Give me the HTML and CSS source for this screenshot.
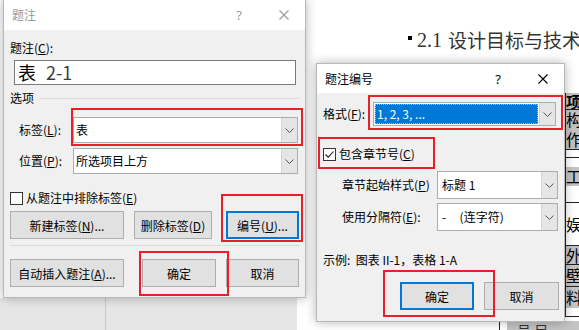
FILE: index.html
```html
<!DOCTYPE html>
<html lang="zh-CN">
<head>
    <meta charset="UTF-8">
    <title>题注</title>
    <link rel="stylesheet" href="styles.css">
</head>
<body>
    <!-- Document behind the dialogs -->
    <div class="doc-margin"><span class="doc-margin-line"></span></div>
    <div class="doc-heading"><span class="doc-bullet"></span><span class="doc-num">2.1</span> 设计目标与技术指标</div>
    <div class="doc-column">
        <div class="cell shade bold h17 line">项</div>
        <div class="cell shade h19">构</div>
        <div class="cell shade h20 line">作</div>
        <div class="cell h7 line"></div>
        <div class="cell h9"></div>
        <div class="cell shade h19">工</div>
        <div class="cell h17 line"></div>
        <div class="cell h42 line">娱</div>
        <div class="cell shade h19 line">外</div>
        <div class="cell shade h21 line">壁</div>
        <div class="cell shade h20">料</div>
        <div class="cell h9 line"></div>
    </div>
    <div class="doc-foot"><span class="doc-foot-line"></span><span class="doc-foot-block">号 目</span></div>

    <!-- 题注 dialog -->
    <div class="dialog caption-dialog">
        <div class="titlebar inactive">
            <span class="title">题注</span>
            <span class="help">?</span>
            <span class="close"><svg width="10" height="10" viewBox="0 0 10 10"><path d="M0.5 0.5 L9.5 9.5 M9.5 0.5 L0.5 9.5" stroke="currentColor" stroke-width="1.1" fill="none"/></svg></span>
        </div>
        <div class="caption-body">
            <div class="field-label">题注(<u>C</u>):</div>
            <div class="caption-input"><span class="caption-word">表</span><span class="caption-num">2-1</span></div>

            <div class="group-title"><span>选项</span><span class="group-line"></span></div>

            <div class="form-row first">
                <span class="row-label">标签(<u>L</u>):</span>
                <div class="select label-select">
                    <span class="select-value">表</span>
                    <span class="select-arrow"><svg width="9" height="5" viewBox="0 0 9 5"><path d="M0.5 0.5 L4.5 4.5 L8.5 0.5" stroke="#555" fill="none"/></svg></span>
                </div>
            </div>
            <div class="form-row">
                <span class="row-label">位置(<u>P</u>):</span>
                <div class="select label-select">
                    <span class="select-value">所选项目上方</span>
                    <span class="select-arrow"><svg width="9" height="5" viewBox="0 0 9 5"><path d="M0.5 0.5 L4.5 4.5 L8.5 0.5" stroke="#555" fill="none"/></svg></span>
                </div>
            </div>

            <div class="check-row exclude">
                <span class="checkbox"></span>
                <span>从题注中排除标签(<u>E</u>)</span>
            </div>

            <div class="button-row row-one">
                <button class="btn w-new">新建标签(<u>N</u>)...</button>
                <button class="btn w-del">删除标签(<u>D</u>)</button>
                <button class="btn default w-num">编号(<u>U</u>)...</button>
            </div>
            <div class="separator"></div>
            <div class="button-row row-two">
                <button class="btn w-new">自动插入题注(<u>A</u>)...</button>
                <button class="btn w-ok">确定</button>
                <button class="btn w-cancel">取消</button>
            </div>
        </div>
    </div>

    <!-- 题注编号 dialog -->
    <div class="dialog numbering-dialog">
        <div class="titlebar">
            <span class="title">题注编号</span>
            <span class="help">?</span>
            <span class="close"><svg width="10" height="10" viewBox="0 0 10 10"><path d="M0.5 0.5 L9.5 9.5 M9.5 0.5 L0.5 9.5" stroke="currentColor" stroke-width="1.1" fill="none"/></svg></span>
        </div>
        <div class="numbering-body">
            <div class="form-row format-row">
                <span class="row-label format-label">格式(<u>F</u>):</span>
                <div class="select format-select">
                    <span class="select-value selected"><span class="focus-rect">1, 2, 3, ...</span></span>
                    <span class="select-arrow"><svg width="9" height="5" viewBox="0 0 9 5"><path d="M0.5 0.5 L4.5 4.5 L8.5 0.5" stroke="#555" fill="none"/></svg></span>
                </div>
            </div>

            <div class="check-row chapter-check">
                <span class="checkbox"><svg width="11" height="11" viewBox="0 0 11 11"><path d="M1.5 5.5 L4.2 8.2 L9.5 2.5" stroke="#222" stroke-width="1.1" fill="none"/></svg></span>
                <span>包含章节号(<u>C</u>)</span>
            </div>

            <div class="form-row indent first-indent">
                <span class="row-label indent-label">章节起始样式(<u>P</u>)</span>
                <div class="select small-select">
                    <span class="select-value">标题 1</span>
                    <span class="select-arrow"><svg width="9" height="5" viewBox="0 0 9 5"><path d="M0.5 0.5 L4.5 4.5 L8.5 0.5" stroke="#555" fill="none"/></svg></span>
                </div>
            </div>
            <div class="form-row indent">
                <span class="row-label indent-label">使用分隔符(<u>E</u>):</span>
                <div class="select small-select">
                    <span class="select-value">-&nbsp;&nbsp;&nbsp;&nbsp;&nbsp;(连字符)</span>
                    <span class="select-arrow"><svg width="9" height="5" viewBox="0 0 9 5"><path d="M0.5 0.5 L4.5 4.5 L8.5 0.5" stroke="#555" fill="none"/></svg></span>
                </div>
            </div>

            <div class="example">示例:&nbsp;&nbsp;图表 II-1，表格 1-A</div>

            <div class="button-row numbering-buttons">
                <button class="btn default w-ok">确定</button>
                <button class="btn w-cancel2">取消</button>
            </div>
        </div>
    </div>

    <!-- red highlight marks -->
    <div class="mark mark-label"></div>
    <div class="mark mark-number"></div>
    <div class="mark mark-ok"></div>
    <div class="mark mark-format"></div>
    <div class="mark mark-chapter"></div>
    <div class="mark mark-ok2"></div>
</body>
</html>
```

FILE: styles.css
```css
/* General */
* {
    box-sizing: border-box;
}

body {
    margin: 0;
    width: 579px;
    height: 330px;
    overflow: hidden;
    position: relative;
    background: #fff;
    font-family: "Noto Sans CJK SC", "Noto Sans", sans-serif;
    font-size: 12px;
    line-height: 16px;
    color: #000;
}

u {
    text-decoration: underline;
    text-underline-offset: 1px;
}

/* Document canvas */
.doc-margin {
    position: absolute;
    left: 0;
    top: 298px;
    width: 297px;
    height: 32px;
    background: #e6e6e6;
}

.doc-margin-line {
    position: absolute;
    left: 105px;
    top: 0;
    bottom: 0;
    width: 1px;
    background: #c8c8c8;
}

.doc-heading {
    position: absolute;
    left: 408px;
    top: 29px;
    width: 171px;
    overflow: hidden;
    white-space: nowrap;
    font-size: 19px;
    line-height: 22px;
    color: #333;
    display: flex;
    align-items: center;
}

.doc-bullet {
    flex: none;
    width: 4px;
    height: 4px;
    background: #000;
    margin-right: 5px;
    align-self: flex-start;
    margin-top: 7px;
}

.doc-num {
    font-family: "Liberation Serif", serif;
    font-size: 20px;
    margin-right: 6px;
}

.doc-column {
    position: absolute;
    left: 565px;
    top: 93px;
    width: 14px;
    border-left: 1px solid #222;
    overflow: hidden;
}

.cell {
    font-size: 16px;
    overflow: hidden;
    white-space: nowrap;
    width: 20px;
}

.cell.shade {
    background: #c3c3c3;
}

.cell.bold {
    font-weight: bold;
}

.cell.line {
    border-bottom: 1px solid #222;
}

.h7 { height: 8px; }
.h9 { height: 9px; }
.h17 { height: 17px; line-height: 16px; }
.h19 { height: 19px; line-height: 19px; }
.h20 { height: 21px; line-height: 20px; }
.h21 { height: 22px; line-height: 21px; }
.h42 { height: 43px; line-height: 42px; }

.doc-foot {
    position: absolute;
    left: 499px;
    top: 321px;
    width: 80px;
    height: 9px;
    display: flex;
    overflow: hidden;
}

.doc-foot-line {
    width: 1px;
    background: #222;
}

.doc-foot-block {
    margin-left: 7px;
    flex: 1;
    background: #c3c3c3;
    font-size: 14px;
    line-height: 18px;
    padding-left: 10px;
    color: #333;
}

/* Dialog windows */
.dialog {
    position: absolute;
    background: #f0f0f0;
    border: 1px solid #b8b8b8;
    box-shadow: 0 0 10px rgba(0, 0, 0, 0.3);
}

.caption-dialog {
    left: 3px;
    top: -1px;
    width: 303px;
    height: 299px;
}

.numbering-dialog {
    left: 316px;
    top: 63px;
    width: 249px;
    height: 259px;
}

.titlebar {
    height: 29px;
    background: #fff;
    display: flex;
    align-items: center;
    padding: 0 6px 0 8px;
    color: #000;
}

.caption-dialog .titlebar {
    height: 30px;
}

.titlebar.inactive {
    color: #999;
}

.titlebar .title {
    flex: 1;
}

.help {
    width: 20px;
    text-align: center;
    font-family: "Noto Sans", sans-serif;
    font-size: 13px;
}

.close {
    width: 30px;
    margin-left: 20px;
    display: flex;
    justify-content: center;
}

.close svg {
    display: block;
}

/* 题注 dialog body */
.caption-body {
    padding: 10px 5px 0 6px;
}

.caption-input {
    margin: 4px 0 0 4px;
    width: 282px;
    height: 25px;
    border: 1px solid #7a7a7a;
    background: #fff;
    font-size: 18px;
    line-height: 23px;
    padding-left: 3px;
    display: flex;
}

.caption-word {
    margin-right: 10px;
}

.caption-num {
    color: #3b3b3b;
}

.group-title {
    margin-top: 5px;
    display: flex;
    align-items: center;
}

.group-line {
    flex: 1;
    height: 1px;
    background: #dcdcdc;
    margin-left: 5px;
}

.form-row {
    display: flex;
    align-items: center;
    padding-left: 9px;
    margin-top: 5px;
}

.form-row.first {
    margin-top: 11px;
}

.row-label {
    width: 54px;
}

/* Combo boxes */
.select {
    display: flex;
    background: #fff;
    border: 1px solid #adadad;
}

.label-select {
    width: 225px;
    height: 26px;
}

.select-value {
    flex: 1;
    display: flex;
    align-items: center;
    padding-left: 2px;
    white-space: nowrap;
}

.select-arrow {
    width: 16px;
    background: #e5e5e5;
    border-left: 1px solid #d4d4d4;
    display: flex;
    align-items: center;
    justify-content: center;
}

.check-row {
    display: flex;
    align-items: center;
}

.check-row.exclude {
    margin-top: 16px;
}

.checkbox {
    width: 13px;
    height: 13px;
    border: 1px solid #333;
    background: #fff;
    margin-right: 3px;
    display: flex;
    align-items: center;
    justify-content: center;
}

/* Buttons */
.button-row {
    display: flex;
}

.row-one {
    margin-top: 5px;
}

.row-two {
    margin-top: 13px;
}

.btn {
    height: 28px;
    padding: 0;
    border: 1px solid #adadad;
    background: #e1e1e1;
    font-family: inherit;
    font-size: 12px;
    color: #000;
    display: flex;
    align-items: center;
    justify-content: center;
    white-space: nowrap;
}

.btn.default {
    border: 2px solid #0078d7;
}

.w-new {
    width: 114px;
}

.w-del {
    width: 78px;
    margin-left: 10px;
}

.w-num {
    width: 73px;
    margin-left: 14px;
}

.row-two .w-ok {
    width: 74px;
    margin-left: 18px;
}

.w-cancel {
    width: 73px;
    margin-left: 10px;
}

.separator {
    margin-top: 6px;
    height: 1px;
    background: #dcdcdc;
}

/* 题注编号 dialog body */
.numbering-body {
    padding-left: 6px;
}

.format-row {
    padding-left: 0;
    margin-top: 9px;
}

.format-label {
    width: 50px;
}

.format-select {
    width: 183px;
    height: 24px;
}

.select-value.selected {
    padding: 1px;
}

.focus-rect {
    width: 100%;
    height: 100%;
    background: #0078d7;
    color: #fff;
    outline: 1px dotted #f3a65c;
    outline-offset: -1px;
    padding-left: 2px;
    display: flex;
    align-items: center;
}

.chapter-check {
    margin-top: 20px;
}

.form-row.indent {
    padding-left: 19px;
    margin-top: 4px;
}

.form-row.first-indent {
    margin-top: 9px;
}

.indent-label {
    width: 95px;
}

.small-select {
    width: 121px;
    height: 28px;
}

.small-select .select-value {
    padding-left: 4px;
}

.example {
    margin-top: 21px;
}

.numbering-buttons {
    margin-top: 14px;
    padding-left: 77px;
}

.numbering-buttons .w-ok {
    width: 74px;
}

.w-cancel2 {
    width: 75px;
    margin-left: 10px;
}

/* Red highlight marks */
.mark {
    position: absolute;
    border: 2px solid #e8202a;
}

.mark-label {
    left: 71px;
    top: 108px;
    width: 232px;
    height: 38px;
}

.mark-number {
    left: 221px;
    top: 194px;
    width: 82px;
    height: 48px;
}

.mark-ok {
    left: 139px;
    top: 251px;
    width: 90px;
    height: 45px;
}

.mark-format {
    left: 368px;
    top: 95px;
    width: 195px;
    height: 35px;
}

.mark-chapter {
    left: 318px;
    top: 137px;
    width: 117px;
    height: 32px;
}

.mark-ok2 {
    left: 383px;
    top: 270px;
    width: 112px;
    height: 47px;
}
```
